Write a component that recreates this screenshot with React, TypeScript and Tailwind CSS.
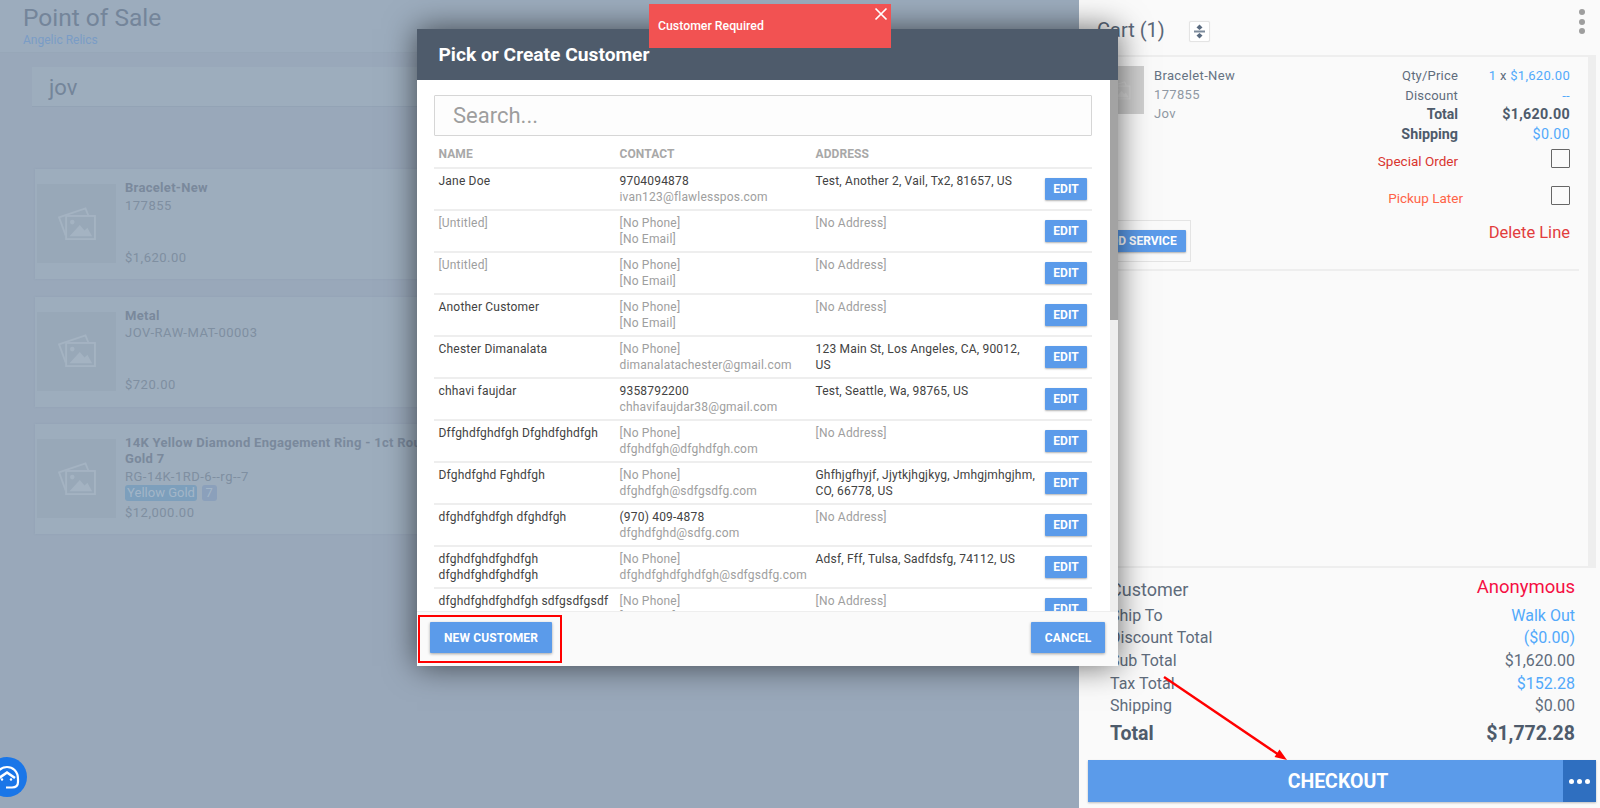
import React from "react";

const font = { fontFamily: "Roboto, 'Noto Sans', sans-serif" };

function Gallery({ small }: { small?: boolean }) {
  const c = small ? "#dadada" : "#a4b3c2";
  return (
    <svg width={small ? 22 : 40} height={small ? 19 : 34} viewBox="0 0 42 36" fill="none" stroke={c} strokeWidth="2">
      <path d="M9 30 L2 11 L30 1.5 L33 9" />
      <rect x="9.5" y="9.5" width="30.5" height="24.5" />
      <circle cx="16" cy="16" r="2.4" fill={c} stroke="none" />
      <path d="M13 31 L24 19 L29 25 L32 22 L37 31 Z" fill={c} stroke="none" />
    </svg>
  );
}

function Product({ name, sku, price, opts }: { name: React.ReactNode; sku: string; price: string; opts?: boolean }) {
  return (
    <div className="h-[110px] flex bg-[#9dadbd] shadow-[0_0_2px_rgba(130,150,170,0.35)] pl-[2px] pt-[15px]">
      <div className="w-[79px] h-[79px] bg-[#98a8b8] flex items-center justify-center shrink-0">
        <Gallery />
      </div>
      <div className="ml-[9px] w-[320px] h-[79px] flex flex-col justify-between text-[13px] leading-[16px] tracking-[0.5px] text-[#7e8ea0] relative -top-[4px]">
        <div>
          <div className="font-bold text-[#7a899c] w-[960px] tracking-[0.3px]">{name}</div>
          <div className="mt-[1.5px] text-[#7f8fa1]">{sku}</div>
          {opts && (
            <div className="flex gap-[5px]">
              <span className="w-[72px] h-[16px] bg-[#7d9fbc] text-[#a3b6c8] rounded-[3px] text-center text-[13px] tracking-normal">Yellow Gold</span>
              <span className="w-[15px] h-[16px] bg-[#8ba0bb] text-[#a3b6c8] rounded-[3px] text-center text-[13px]">7</span>
            </div>
          )}
        </div>
        <div className={opts ? "relative top-[4px] text-[#7f8fa1]" : "relative top-[6.5px] text-[#7f8fa1]"}>{price}</div>
      </div>
    </div>
  );
}

const rows: { n: string; p: string; e: string; a: string; np?: boolean; ne?: boolean; na?: boolean; un?: boolean }[] = [
  { n: "Jane Doe", p: "9704094878", e: "ivan123@flawlesspos.com", a: "Test, Another 2, Vail, Tx2, 81657, US" },
  { n: "[Untitled]", un: true, p: "[No Phone]", np: true, e: "[No Email]", a: "[No Address]", na: true },
  { n: "[Untitled]", un: true, p: "[No Phone]", np: true, e: "[No Email]", a: "[No Address]", na: true },
  { n: "Another Customer", p: "[No Phone]", np: true, e: "[No Email]", a: "[No Address]", na: true },
  { n: "Chester Dimanalata", p: "[No Phone]", np: true, e: "dimanalatachester@gmail.com", a: "123 Main St, Los Angeles, CA, 90012, US" },
  { n: "chhavi faujdar", p: "9358792200", e: "chhavifaujdar38@gmail.com", a: "Test, Seattle, Wa, 98765, US" },
  { n: "Dffghdfghdfgh Dfghdfghdfgh", p: "[No Phone]", np: true, e: "dfghdfgh@dfghdfgh.com", a: "[No Address]", na: true },
  { n: "Dfghdfghd Fghdfgh", p: "[No Phone]", np: true, e: "dfghdfgh@sdfgsdfg.com", a: "Ghfhjgfhyjf, Jjytkjhgjkyg, Jmhgjmhgjhm, CO, 66778, US" },
  { n: "dfghdfghdfgh dfghdfgh", p: "(970) 409-4878", e: "dfghdfghd@sdfg.com", a: "[No Address]", na: true },
  { n: "dfghdfghdfghdfgh dfghdfghdfghdfgh", p: "[No Phone]", np: true, e: "dfghdfghdfghdfgh@sdfgsdfg.com", a: "Adsf, Fff, Tulsa, Sadfdsfg, 74112, US" },
  { n: "dfghdfghdfghdfgh sdfgsdfgsdf", p: "[No Phone]", np: true, e: "[No Email]", a: "[No Address]", na: true },
];

function Modal() {
  return (
    <div className="absolute left-[417px] top-[29px] w-[701px] h-[637px] bg-white flex flex-col shadow-[0_0_30px_rgba(0,0,0,0.6)] z-20">
      <div className="h-[51px] bg-[#4e5b6b] shrink-0 flex items-center pl-[21.5px] pt-[1px] text-white text-[19.2px] font-bold">
        Pick or Create Customer
      </div>
      <div className="flex flex-1 min-h-0">
        <div className="w-[693px] pl-[17px] pr-[18px] pt-[15px] overflow-hidden">
          <div className="h-[41px] border border-[#d6d6d6] rounded-[1px] bg-[#fdfdfd] flex items-center pl-[18px] text-[22px] text-[#9e9e9e]">
            Search...
          </div>
          <div className="h-[33px] border-b-2 border-[#eeeeee] grid grid-cols-[181px_196px_1fr] pl-[4.5px] pt-[4px] items-center text-[12px] font-bold text-[#a8a8a8] tracking-[0.1px]">
            <div>NAME</div>
            <div>CONTACT</div>
            <div>ADDRESS</div>
          </div>
          {rows.map((r, i) => (
            <div key={i} className="h-[42.05px] border-b-2 border-[#eeeeee] grid grid-cols-[181px_196px_1fr_49px] pl-[4.5px] pt-[4px] text-[12px] leading-[16px] tracking-[0.2px] text-[#424242] shrink-0">
              <div className={r.un ? "pr-[4px] text-[#9e9e9e]" : "pr-[4px]"}>{r.n}</div>
              <div>
                <div className={r.np ? "text-[#9e9e9e]" : ""}>{r.p}</div>
                <div className="text-[#9e9e9e] whitespace-nowrap">{r.e}</div>
              </div>
              <div className={r.na ? "pr-[6px] text-[#9e9e9e]" : "pr-[6px]"}>{r.a}</div>
              <div className="pt-[5px] pl-[2px]">
                <div className="w-[42px] h-[22px] bg-[#5b9bea] rounded-[1px] shadow-[0_1px_2px_rgba(0,0,0,0.3)] flex items-center justify-center text-white font-bold tracking-normal">
                  EDIT
                </div>
              </div>
            </div>
          ))}
        </div>
        <div className="w-[8px] bg-[#eeeeee]">
          <div className="h-[240px] bg-[#a3a3a3]" />
        </div>
      </div>
      <div className="h-[55px] shrink-0 bg-[#fafafa] border-t border-[#eeeeee] flex items-start justify-between pl-[13px] pr-[13px] pt-[10px] relative">
        <div className="w-[122px] h-[31px] bg-[#5b9bea] rounded-[1px] shadow-[0_1px_3px_rgba(0,0,0,0.35)] flex items-center justify-center text-white text-[12px] font-bold tracking-[0.15px]">
          NEW CUSTOMER
        </div>
        <div className="w-[74px] h-[31px] bg-[#5b9bea] rounded-[1px] shadow-[0_1px_3px_rgba(0,0,0,0.35)] flex items-center justify-center text-white text-[12px] font-bold tracking-[0.2px]">
          CANCEL
        </div>
        <div className="absolute left-[1px] top-[3px] w-[144px] h-[48px] border-2 border-[#ff0000]" />
      </div>
    </div>
  );
}

function CartLine({ label, value, lc, vc }: { label: string; value: React.ReactNode; lc: string; vc: string }) {
  return (
    <div className="flex justify-between h-[22.7px] items-center">
      <span className={lc}>{label}</span>
      <span className={vc}>{value}</span>
    </div>
  );
}

function Cart() {
  return (
    <div className="w-[521px] h-full bg-[#fafafa] flex flex-col text-[#4e5b6b] relative">
      <div className="h-[57px] shrink-0 border-b-2 border-[#eeeeee] mr-[4px] flex items-start pl-[18px] pt-[15px] relative">
        <span className="text-[20px] leading-[30px] text-[#5b6879]">Cart (1)</span>
        <div className="ml-[24px] mt-[6px] w-[21px] h-[21px] border border-[#e4e4e4] rounded-[2px] bg-white flex items-center justify-center shadow-[0_0_1px_rgba(0,0,0,0.1)]">
          <svg width="11" height="15" viewBox="0 0 11 15" fill="#5a6b80">
            <path d="M5.5 0.5 L8.5 3.5 L5.5 6 L2.5 3.5 Z" />
            <rect x="0" y="6.5" width="11" height="2" fill="#7d8b9c" />
            <path d="M5.5 9 L8.5 11.5 L5.5 14.5 L2.5 11.5 Z" />
          </svg>
        </div>
        <div className="absolute left-[500px] top-[9px] flex flex-col gap-[3.5px]">
          <div className="w-[6px] h-[6px] rounded-full bg-[#9e9e9e]" />
          <div className="w-[6px] h-[6px] rounded-full bg-[#9e9e9e]" />
          <div className="w-[6px] h-[6px] rounded-full bg-[#9e9e9e]" />
        </div>
      </div>
      <div className="flex-1 min-h-0 flex">
        <div className="flex-1 pr-[9px]">
          <div className="h-[214px] border-b-2 border-[#eeeeee] relative">
            <div className="flex pt-[9px] pl-[17px]">
              <div className="w-[48px] h-[48px] bg-[#d0d0d0] shrink-0 flex items-center justify-center">
                <Gallery small />
              </div>
              <div className="ml-[10px] text-[13px] leading-[19.2px] tracking-[0.35px] text-[#8f98a3]">
                <div className="text-[#667383]">Bracelet-New</div>
                <div>177855</div>
                <div>Jov</div>
              </div>
              <div className="flex-1 pr-[9px]">
                <div className="grid grid-cols-[1fr_112px] text-[13px] leading-[19.5px] tracking-[0.3px]">
                  <div className="text-right text-[#5f6c7c] tracking-[0.2px]">Qty/Price</div>
                  <div className="text-right text-[#52a9fa]">1 <span className="text-[#5f6c7c]">x</span> $1,620.00</div>
                  <div className="text-right text-[#5f6c7c] tracking-[0.2px]">Discount</div>
                  <div className="text-right text-[#52a9fa]">--</div>
                  <div className="text-right font-bold text-[14px] text-[#4e5b6b] tracking-normal">Total</div>
                  <div className="text-right font-bold text-[14.3px] text-[#4e5b6b]">$1,620.00</div>
                  <div className="text-right font-bold text-[14.3px] text-[#4e5b6b] tracking-normal">Shipping</div>
                  <div className="text-right text-[14.3px] text-[#52a9fa]">$0.00</div>
                </div>
                <div className="flex justify-end items-center mt-[5px] h-[19px]">
                  <span className="text-[13.5px] text-[#d9352f] whitespace-nowrap mr-[93px] relative top-[3px]">Special Order</span>
                  <div className="w-[19px] h-[19px] border border-[#666] rounded-[1px]" />
                </div>
                <div className="flex justify-end items-center mt-[18px] h-[19px]">
                  <span className="text-[13.5px] text-[#ff6347] whitespace-nowrap mr-[88px] relative top-[3px]">Pickup Later</span>
                  <div className="w-[19px] h-[19px] border border-[#666] rounded-[1px]" />
                </div>
              </div>
            </div>
            <div className="absolute left-[9px] top-[163px] w-[103px] h-[42px] border border-[#e4e4e4] flex items-center pl-[4px]">
              <div className="w-[93px] h-[22px] bg-[#5b9bea] rounded-[1px] shadow-[0_1px_2px_rgba(0,0,0,0.3)] flex items-center justify-center text-white text-[12px] font-bold">
                ADD SERVICE
              </div>
            </div>
            <div className="absolute right-[9px] top-[164px] text-[16.5px] leading-[24px] text-[#e23d3d]">Delete Line</div>
          </div>
        </div>
        <div className="w-[8px] bg-[#eeeeee] mr-[4px]" />
      </div>
      <div className="h-[242px] shrink-0 flex flex-col">
        <div className="h-[2px] bg-[#eeeeee] mr-[4px] shrink-0" />
        <div className="pl-[31px] pr-[25px] text-[16px]">
          <div className="flex justify-between pt-[9px] h-[36.2px]">
            <span className="text-[18px] leading-[27px] -mt-[1px] text-[#5f6c7c]">Customer</span>
            <span className="text-[18.5px] leading-[27px] -mt-[3px] text-[#f50f43]">Anonymous</span>
          </div>
          <CartLine label="Ship To" value="Walk Out" lc="text-[#5f6c7c]" vc="text-[#52a9fa]" />
          <CartLine label="Discount Total" value="($0.00)" lc="text-[#5f6c7c]" vc="text-[#52a9fa]" />
          <CartLine label="Sub Total" value="$1,620.00" lc="text-[#5f6c7c]" vc="text-[#5f6c7c]" />
          <CartLine label="Tax Total" value="$152.28" lc="text-[#5f6c7c]" vc="text-[#52a9fa]" />
          <CartLine label="Shipping" value="$0.00" lc="text-[#5f6c7c]" vc="text-[#5f6c7c]" />
          <div className="flex justify-between items-center h-[31px] font-bold text-[19.5px] text-[#4e5b6b]">
            <span>Total</span>
            <span>$1,772.28</span>
          </div>
        </div>
        <div className="ml-[9px] mr-[4px] mt-[11.5px] h-[42px] flex shadow-[0_1px_2px_rgba(0,0,0,0.25)]">
          <div className="flex-1 bg-[#5b9bea] flex items-center justify-center pl-[25px] text-white text-[19.5px] font-bold">CHECKOUT</div>
          <div className="w-[33px] bg-[#2f6fc0] flex items-center justify-center gap-[3px]">
            <div className="w-[5px] h-[5px] rounded-full bg-white" />
            <div className="w-[5px] h-[5px] rounded-full bg-white" />
            <div className="w-[5px] h-[5px] rounded-full bg-white" />
          </div>
        </div>
      </div>
    </div>
  );
}

export default function App() {
  return (
    <div className="relative w-[1600px] h-[808px] overflow-hidden flex bg-[#99a8ba]" style={font}>
      <div className="w-[1079px] h-full shrink-0 flex flex-col overflow-hidden">
        <div className="h-[53px] shrink-0 bg-[#9cacbd] border-b border-[#97a7b8] pl-[23px] pt-[3px]">
          <div className="text-[24.5px] leading-[30px] text-[#74859a]">Point of Sale</div>
          <div className="text-[12px] leading-[16px] -mt-[1px] text-[#7a9cc6]">Angelic Relics</div>
        </div>
        <div className="mt-[14px] ml-[32px] h-[40px] shrink-0 bg-[#9dadbd] border-b border-[#93a3b5] flex items-center pl-[17px] pt-[2px] text-[22px] text-[#74859a]">
          jov
        </div>
        <div className="mt-[62px] ml-[35px] flex flex-col gap-[17.5px]">
          <Product name="Bracelet-New" sku="177855" price="$1,620.00" />
          <Product name="Metal" sku="JOV-RAW-MAT-00003" price="$720.00" />
          <Product
            name={<>14K Yellow Diamond Engagement Ring - 1ct Round Diamond - Yellow<br />Gold 7</>}
            sku="RG-14K-1RD-6--rg--7"
            price="$12,000.00"
            opts
          />
        </div>
      </div>
      <Cart />
      <Modal />
      <div className="absolute left-[649px] top-[4px] w-[242px] h-[44px] bg-[#f25252] z-30 flex items-center pl-[9px] text-white text-[12.3px] font-medium">
        Customer Required
        <svg className="absolute right-[2px] top-[2px]" width="16" height="16" viewBox="0 0 16 16" stroke="white" strokeWidth="1.7" fill="none">
          <path d="M2.5 2.5 L13.5 13.5 M13.5 2.5 L2.5 13.5" />
        </svg>
      </div>
      <div className="absolute -left-[13px] top-[757px] w-[40px] h-[40px] rounded-full bg-[#1a76e8] z-30 flex items-center justify-center">
        <svg width="26" height="28" viewBox="0 0 26 28" fill="none" stroke="white" strokeWidth="2.2">
          <path d="M2 16 C2 0 24 0 24 16 V19 C24 23 22 24.5 18 24.5 H12" />
          <path d="M5 15 L13 9.5 L21 15" strokeWidth="2.6" />
          <circle cx="8" cy="16.5" r="1.2" fill="white" stroke="none" />
          <circle cx="17" cy="16.5" r="1.2" fill="white" stroke="none" />
        </svg>
      </div>
      <svg className="absolute left-0 top-0 z-40 pointer-events-none" width="1600" height="808" fill="none">
        <path d="M1164 677 L1279 755" stroke="#ff0000" strokeWidth="2.4" />
        <path d="M1287 760 L1274.5 757 L1279.5 749.6 Z" fill="#ff0000" />
      </svg>
    </div>
  );
}
